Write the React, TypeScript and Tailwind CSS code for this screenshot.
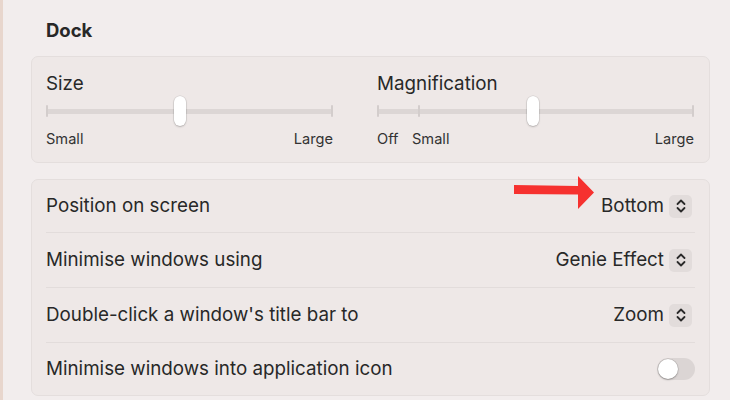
import React from "react";

const font = { fontFamily: "Inter, 'Noto Sans', sans-serif" };

function Stepper() {
  return (
    <div className="w-[23px] h-[23px] rounded-[5px] bg-[#e2dcdb] flex items-center justify-center">
      <svg width="12" height="16" viewBox="0 0 12 16" fill="none">
        <path d="M2.5 6 L6 2.5 L9.5 6" stroke="#2a2a2a" strokeWidth="1.8" strokeLinecap="round" strokeLinejoin="round" />
        <path d="M2.5 10 L6 13.5 L9.5 10" stroke="#2a2a2a" strokeWidth="1.8" strokeLinecap="round" strokeLinejoin="round" />
      </svg>
    </div>
  );
}

function Slider({ width, ticks, thumb }: { width: number; ticks: number[]; thumb: number }) {
  return (
    <div className="relative h-[32px]" style={{ width }}>
      <div className="absolute left-0 right-0 top-[14px] h-[5px] rounded-full bg-[#dcd6d5]" />
      {ticks.map((t, i) => (
        <div key={i} className="absolute top-[10px] w-[2px] h-[12px] rounded-full bg-[#d3cdcc]" style={{ left: t - 1 }} />
      ))}
      <div
        className="absolute top-[1px] w-[12px] h-[30px] rounded-full bg-white shadow-[0_0_0_0.5px_rgba(0,0,0,0.12),0_1px_2px_rgba(0,0,0,0.2)]"
        style={{ left: thumb - 6 }}
      />
    </div>
  );
}

function Row({ label, h, last, children }: { label: string; h: string; last?: boolean; children: React.ReactNode }) {
  return (
    <div className={`flex items-center justify-between ${h} ${last ? "" : "border-b border-[#e2dcdb]"}`}>
      <span className="text-[18.8px] text-[#282828]">{label}</span>
      {children}
    </div>
  );
}

function Popup({ value }: { value: string }) {
  return (
    <div className="flex items-center gap-[5px] mr-[3px]">
      <span className="text-[18.8px] text-[#282828]">{value}</span>
      <Stepper />
    </div>
  );
}

export default function App() {
  return (
    <div className="w-[730px] h-[400px] bg-[#f2eded] flex overflow-hidden" style={font}>
      <div className="w-[3px] bg-[#e8d6cd]" />
      <div className="pl-[28px] w-[707px] flex flex-col">
        <div className="pt-[19px] pl-[15px] h-[41px] text-[18.5px] leading-[22px] font-bold text-[#282828] mb-[15px]">Dock</div>
        <div className="h-[107px] rounded-[7px] border border-[#e4dedd] bg-[#eee8e7] px-[14px] pt-[16px] flex gap-[44px]">
          <div className="flex flex-col w-[287px]">
            <div className="text-[18.8px] leading-[22px] text-[#282828]">Size</div>
            <Slider width={287} ticks={[1, 286]} thumb={134} />
            <div className="mt-[3px] flex justify-between text-[14.6px] leading-[18px] text-[#333]">
              <span>Small</span>
              <span>Large</span>
            </div>
          </div>
          <div className="flex flex-col w-[317px]">
            <div className="text-[18.8px] leading-[22px] text-[#282828]">Magnification</div>
            <Slider width={317} ticks={[1, 42, 316]} thumb={156} />
            <div className="mt-[3px] flex text-[14.6px] leading-[18px] text-[#333]">
              <span className="w-[35px]">Off</span>
              <span>Small</span>
              <span className="ml-auto">Large</span>
            </div>
          </div>
        </div>
        <div className="mt-[16px] h-[217px] rounded-[7px] border border-[#e4dedd] bg-[#eee8e7] px-[14px] flex flex-col">
          <Row label="Position on screen" h="h-[53px]">
            <div className="relative">
              <svg className="absolute left-[-87px] top-[-16px]" width="82" height="34" viewBox="0 0 82 34">
                <path d="M0 9 L64 10 L64 0 L80 16.5 L64 33 L64 18.5 L0 18 Z" fill="#f6312f" />
              </svg>
              <Popup value="Bottom" />
            </div>
          </Row>
          <Row label="Minimise windows using" h="h-[55px]">
            <Popup value="Genie Effect" />
          </Row>
          <Row label="Double-click a window's title bar to" h="h-[55px]">
            <Popup value="Zoom" />
          </Row>
          <Row label="Minimise windows into application icon" h="h-[52px]" last>
            <div className="w-[38px] h-[22px] rounded-full bg-[#dbd5d4] p-[1px] flex items-center">
              <div className="w-[20px] h-[20px] rounded-full bg-white shadow-[0_0_0_0.5px_rgba(0,0,0,0.15),0_1px_2px_rgba(0,0,0,0.25)]" />
            </div>
          </Row>
        </div>
      </div>
    </div>
  );
}
